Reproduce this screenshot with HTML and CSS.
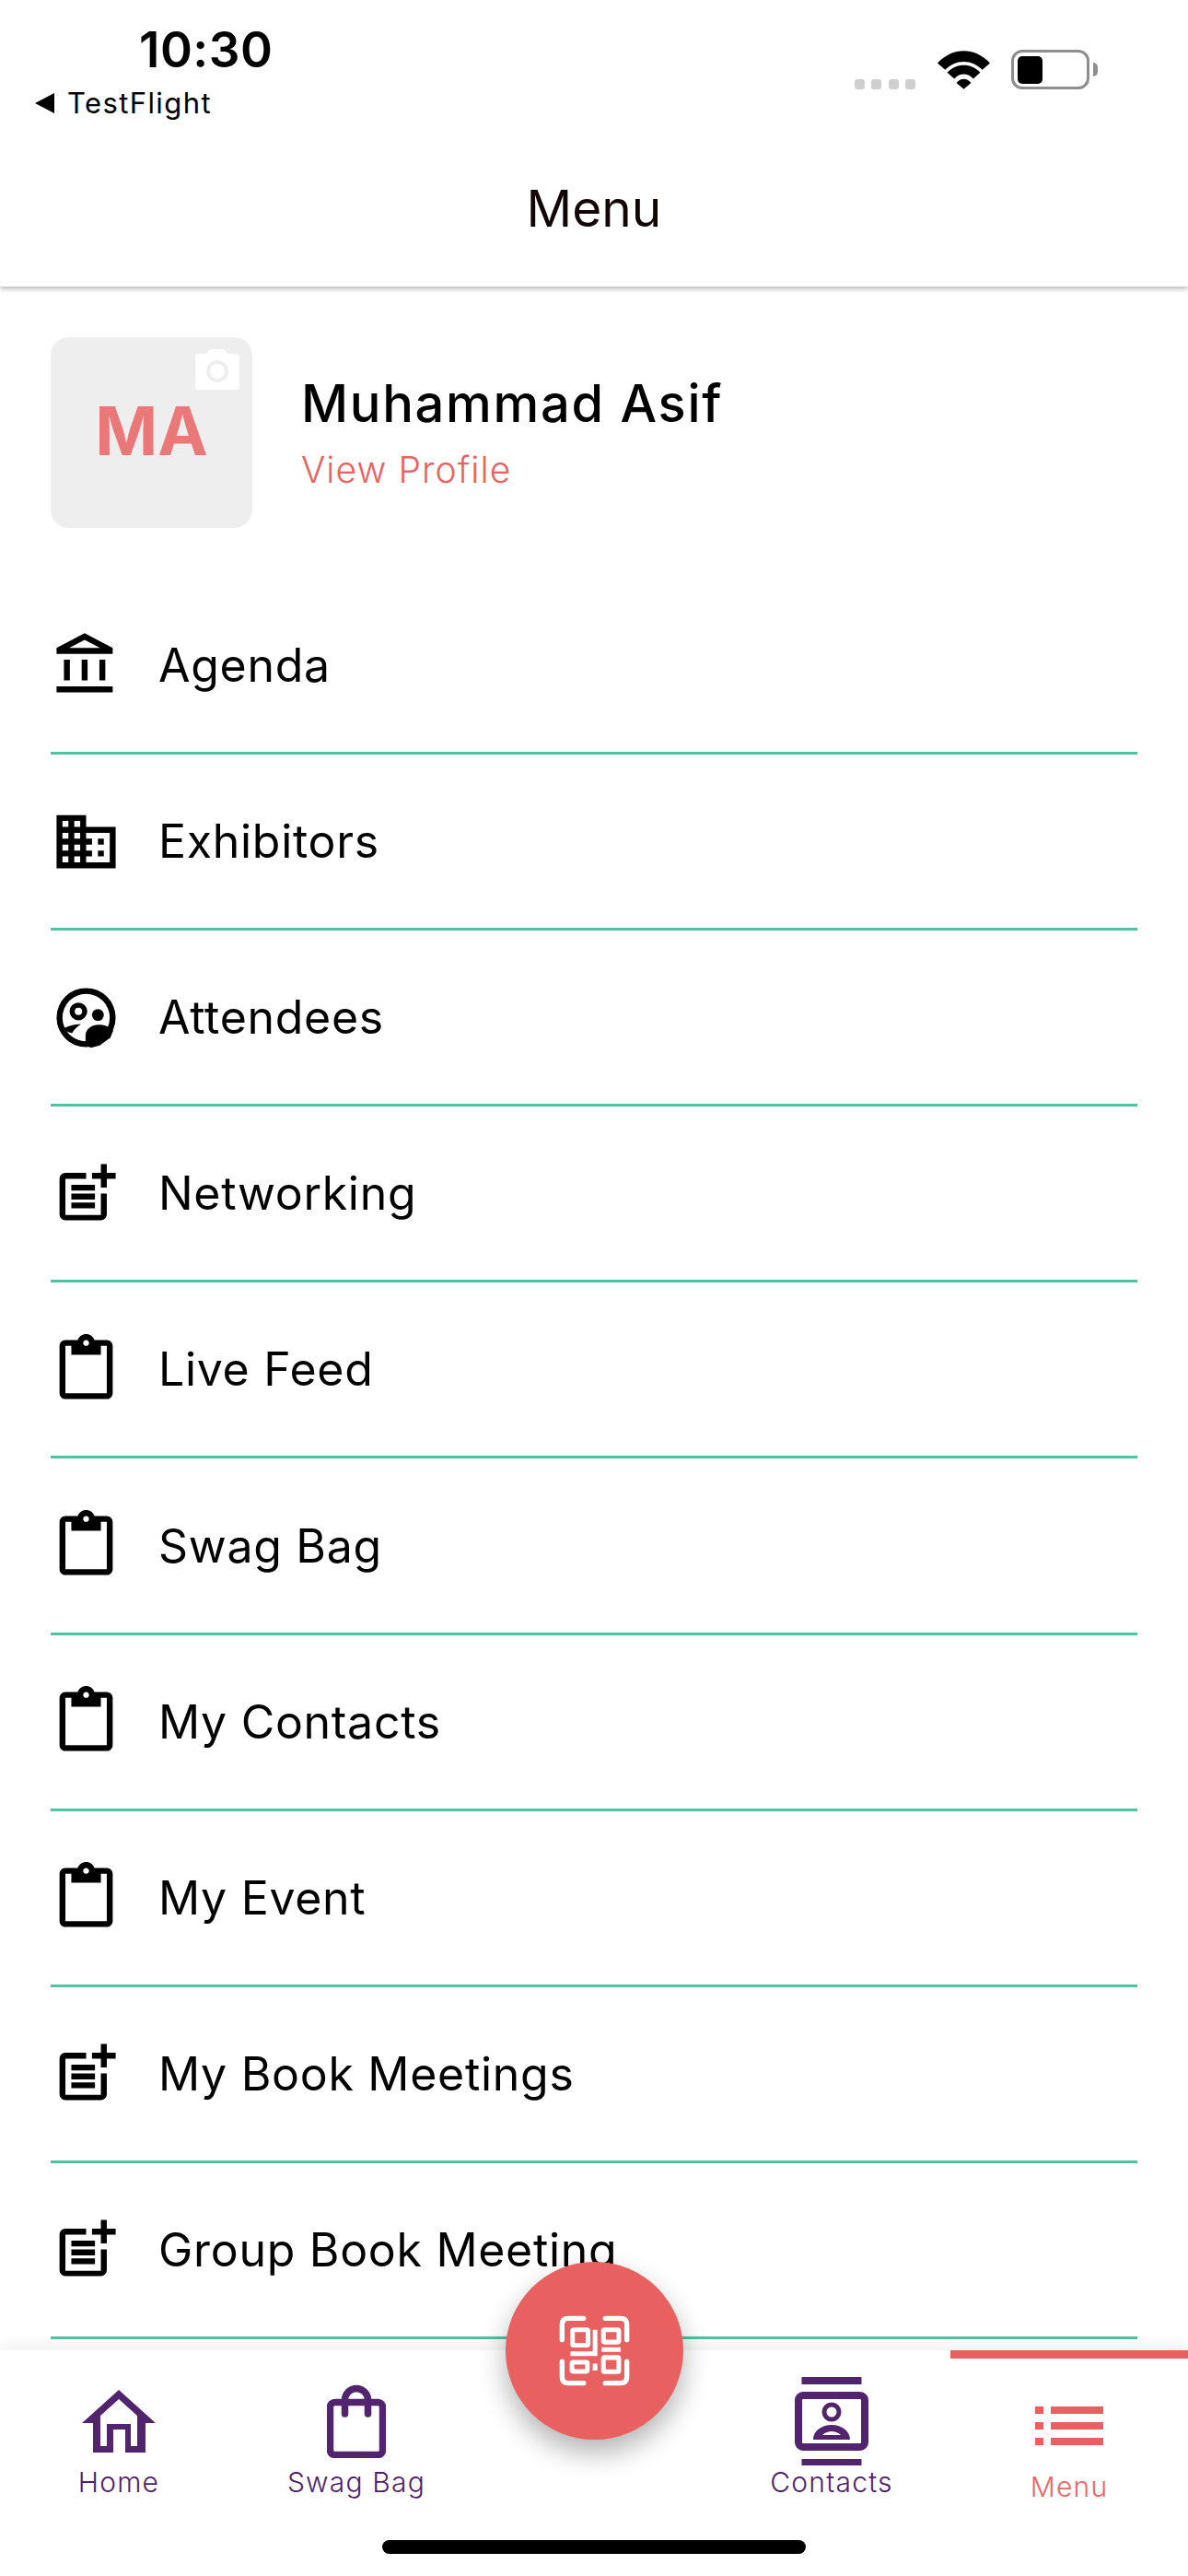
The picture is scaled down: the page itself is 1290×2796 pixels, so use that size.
FILE: index.html
```html
<!DOCTYPE html>
<html lang="en">
<head>
<meta charset="utf-8">
<title>Menu</title>
<link rel="stylesheet" href="styles.css">
</head>
<body>
<svg class="sprite" xmlns="http://www.w3.org/2000/svg">
  <symbol id="i-bank" viewBox="0 0 24 24"><path d="M6.5 10h-2v7h2v-7zm6 0h-2v7h2v-7zm8.5 9H2v2h19v-2zm-2.5-9h-2v7h2v-7zm-7-6.74L16.71 6H6.29l5.21-2.74m0-2.26L2 6v2h19V6l-9.5-5z"/></symbol>
  <symbol id="i-domain" viewBox="0 0 24 24"><path d="M12 7V3H2v18h20V7H12zM6 19H4v-2h2v2zm0-4H4v-2h2v2zm0-4H4V9h2v2zm0-4H4V5h2v2zm4 12H8v-2h2v2zm0-4H8v-2h2v2zm0-4H8V9h2v2zm0-4H8V5h2v2zm10 12h-8v-2h2v-2h-2v-2h2v-2h-2V9h8v10zm-2-8h-2v2h2v-2zm0 4h-2v2h2v-2z"/></symbol>
  <symbol id="i-group" viewBox="0 0 24 24"><path fill-rule="evenodd" d="M12 2a10 10 0 1 0 0 20 10 10 0 0 0 0-20zm0 2a8 8 0 1 1 0 16 8 8 0 0 1 0-16z"/><path fill-rule="evenodd" d="M9.400 6.900a3 3 0 1 0 0 6 3 3 0 0 0 0-6zm0 1.750a1.250 1.250 0 1 1 0 2.500 1.250 1.250 0 0 1 0-2.500z"/><circle cx="16" cy="11.100" r="2"/><path d="M11.800 21v-3c0-2.200 2.200-3.600 4.400-3.600 1.800 0 3.800.6 5 2l-1 2.400-3.600 2.600-3 .8z"/><path d="M4 15.900c1.500-.9 3.800-1.600 6.300-1.700-1.400 1-2.300 1.800-3.100 3.100l-2.600-.9z"/></symbol>
  <symbol id="i-post" viewBox="0 0 24 24"><path d="M17 19.22H5V7h7V5H5c-1.100 0-2 .9-2 2v12c0 1.100.9 2 2 2h12c1.100 0 2-.9 2-2v-7h-2v7.220z"/><path d="M19 2h-2v3h-3c.01.01 0 2 0 2h3v2.990c.01.01 2 0 2 0V7h3V5h-3V2z"/><path d="M7 9h8v2H7zM7 12v2h8v-2h-3zM7 15h8v2H7z"/></symbol>
  <symbol id="i-clip" viewBox="0 0 24 24"><path d="M19 2h-4.180C14.400.84 13.300 0 12 0S9.600.84 9.180 2H5c-1.100 0-2 .9-2 2v16c0 1.100.9 2 2 2h14c1.100 0 2-.9 2-2V4c0-1.100-.9-2-2-2zm-7 0c.55 0 1 .45 1 1s-.45 1-1 1-1-.45-1-1 .45-1 1-1zm7 18H5V4h2v3h10V4h2v16z"/></symbol>
</svg>

<div class="app">
  <header class="topbar">
    <div class="status">
      <div class="status-left">
        <div class="time">10:30</div>
        <div class="back"><span class="back-arrow"></span>TestFlight</div>
      </div>
      <div class="status-right">
        <div class="signal"><i></i><i></i><i></i><i></i></div>
        <svg class="wifi" viewBox="293 45 172 125"><path d="M293 85C318 58 348 45 379 45s61 13 86 40l-25 22c-18-18-38-27-61-27s-43 9-61 27z"/><path d="M325 116c16-16 34-24 54-24s38 8 54 24l-23 20c-9-10-19-15-31-15s-22 5-31 15z"/><path d="M355 150c7-9 15-13 24-13s17 4 24 13l-24 20z"/></svg>
        <div class="battery"><span class="battery-fill"></span></div>
        <span class="battery-nub"></span>
      </div>
    </div>
    <h1 class="title">Menu</h1>
  </header>

  <main class="content">
    <section class="profile">
      <div class="avatar">
        <span class="initials">MA</span>
        <svg class="camera" viewBox="0 0 48 44"><path class="camera-body" d="M3 5h9l2-3c.6-1.300 1.600-2 3-2h13c1.400 0 2.400.7 3 2l2 3h10c1.700 0 3 1.300 3 3v33c0 1.700-1.300 3-3 3H3c-1.700 0-3-1.300-3-3V8c0-1.700 1.300-3 3-3z"/><circle class="camera-lens" cx="24" cy="24" r="10"/></svg>
      </div>
      <div class="who">
        <div class="name">Muhammad Asif</div>
        <div class="view">View Profile</div>
      </div>
    </section>

    <nav class="menu-list">
      <a class="row"><svg class="row-icon"><use href="#i-bank"/></svg><span>Agenda</span></a>
      <a class="row"><svg class="row-icon"><use href="#i-domain"/></svg><span>Exhibitors</span></a>
      <a class="row"><svg class="row-icon"><use href="#i-group"/></svg><span>Attendees</span></a>
      <a class="row"><svg class="row-icon"><use href="#i-post"/></svg><span>Networking</span></a>
      <a class="row"><svg class="row-icon"><use href="#i-clip"/></svg><span>Live Feed</span></a>
      <a class="row"><svg class="row-icon"><use href="#i-clip"/></svg><span>Swag Bag</span></a>
      <a class="row"><svg class="row-icon"><use href="#i-clip"/></svg><span>My Contacts</span></a>
      <a class="row"><svg class="row-icon"><use href="#i-clip"/></svg><span>My Event</span></a>
      <a class="row"><svg class="row-icon"><use href="#i-post"/></svg><span>My Book Meetings</span></a>
      <a class="row"><svg class="row-icon"><use href="#i-post"/></svg><span>Group Book Meeting</span></a>
    </nav>
  </main>

  <footer class="tabbar">
    <button class="fab" aria-label="Scan">
      <svg class="qr" viewBox="228 215 230 230">
        <path class="qr-thin" d="M238 295V245q0-20 20-20h50M378 225h50q20 0 20 20v50M448 365v50q0 20-20 20h-50M308 435h-50q-20 0-20-20v-50"/>
        <rect class="qr-line" x="272" y="262" width="50" height="50" rx="4"/>
        <rect class="qr-line" x="372" y="262" width="50" height="40" rx="4"/>
        <rect class="qr-line" x="270" y="367" width="50" height="30" rx="4"/>
        <rect class="qr-line" x="372" y="352" width="50" height="46" rx="4"/>
        <path class="qr-line" d="M345 262v78h-80M366 326h62M345 372v22"/>
      </svg>
    </button>
    <div class="tabs">
      <a class="tab">
        <span class="tab-icon"><svg class="ico-home" viewBox="0 0 80 68"><path fill-rule="evenodd" d="M40 0l40 36H69v32H47V43H34v25H12V36H0zm0 10L20 28v33h7V37h26v24h7V28z"/></svg></span>
        <span class="tab-label">Home</span>
      </a>
      <a class="tab">
        <span class="tab-icon"><svg class="ico-bag" viewBox="0 0 64 80"><rect x="3.500" y="19.500" width="57" height="57" rx="5"/><path d="M19.500 32V17a12.500 12.500 0 0 1 25 0v15"/></svg></span>
        <span class="tab-label">Swag Bag</span>
      </a>
      <div class="tab tab-gap"></div>
      <a class="tab">
        <span class="tab-icon"><svg class="ico-contacts" viewBox="0 0 80 96"><path class="solid" d="M7.500 0h65v8h-65zM7.500 89h65v7h-65z"/><rect x="4" y="20" width="72" height="56" rx="5"/><circle class="head" cx="40" cy="38" r="8"/><path class="solid" fill-rule="evenodd" d="M20 68c0-10 10-16 20-16s20 6 20 16zm10-5h20c-3-3-7-4-10-4s-7 1-10 4z"/></svg></span>
        <span class="tab-label">Contacts</span>
      </a>
      <a class="tab tab-active">
        <span class="tab-icon"><span class="ico-menu"><i></i><b></b><i></i><b></b><i></i><b></b></span></span>
        <span class="tab-label">Menu</span>
      </a>
    </div>
    <div class="home-indicator"></div>
  </footer>
</div>
</body>
</html>
```
FILE: styles.css
```css
* { box-sizing: border-box; }
html, body { margin: 0; padding: 0; background: #fff; }
body { font-family: Inter, "Liberation Sans", sans-serif; color: #000; }
.sprite { display: none; }

.app { width: 1290px; height: 2796px; display: flex; flex-direction: column; overflow: hidden; background: #fff; }

/* header */
.topbar { height: 311px; flex: none; position: relative; z-index: 2; background: #fff; box-shadow: 0 2px 6px rgba(0,0,0,.32); }
.status { display: flex; justify-content: space-between; padding: 23px 98px 0 38px; height: 140px; }
.status-left { display: flex; flex-direction: column; }
.time { font-size: 53px; font-weight: 600; line-height: 62px; margin-left: 113px; letter-spacing: .5px; }
.back { display: flex; align-items: center; gap: 14px; font-size: 31px; font-weight: 400; line-height: 36px; margin-top: 9px; letter-spacing: 1.400px; }
.back-arrow { width: 0; height: 0; border-style: solid; border-width: 11px 21px 11px 0; border-color: transparent #000 transparent transparent; }
.status-right { display: flex; align-items: flex-end; height: 74px; }
.signal { display: flex; gap: 7.300px; margin-right: 24px; }
.signal i { width: 11px; height: 11px; border-radius: 3px; background: #cfcfcf; }
.wifi { width: 57px; height: 42px; margin-right: 23px; display: block; }
.battery { width: 85px; height: 43px; border: 3px solid #8e8e8e; border-radius: 12px; padding: 4px; }
.battery-fill { display: block; width: 27px; height: 30px; background: #000; border-radius: 5px; }
.battery-nub { width: 5px; height: 15px; margin: 0 0 14px 4px; background: #8e8e8e; border-radius: 0 8px 8px 0; }
.title { margin: 0; text-align: center; font-size: 55px; font-weight: 400; line-height: 70px; color: #120606; padding-top: 51px; }

/* body */
.content { flex: 1; overflow: hidden; padding: 55px 55px 0; }
.profile { display: flex; align-items: center; gap: 53px; padding-bottom: 55px; }
.avatar { position: relative; width: 219px; height: 207px; background: #eee; border-radius: 20px; display: flex; align-items: center; justify-content: center; }
.initials { font-size: 73px; font-weight: 700; color: #ea7878; line-height: 1; margin-top: -4px; letter-spacing: 0; }
.camera { position: absolute; top: 13px; right: 14px; width: 48px; height: 44px; }
.camera-body { fill: #fff; }
.camera-lens { fill: none; stroke: #eee; stroke-width: 4px; }
.who { display: flex; flex-direction: column; gap: 13px; }
.name { font-size: 56px; font-weight: 550; line-height: 68px; letter-spacing: 1.700px; }
.view { font-size: 39px; font-weight: 350; line-height: 50px; color: #eb6262; letter-spacing: 1.100px; }

.row { display: flex; align-items: center; gap: 40px; height: 191.100px; border-bottom: 3px solid #4fc3a1; font-size: 50px; font-weight: 370; line-height: 60px; letter-spacing: .7px; color: #000; }
.row-icon { width: 77px; height: 77px; flex: none; fill: #000; }

/* tabs */
.tabbar { position: relative; z-index: 3; flex: none; height: 245px; background: #fff; box-shadow: 0 -8px 14px rgba(0,0,0,.05); display: flex; flex-direction: column; }
.tabs { display: grid; grid-template-columns: repeat(5, 258px); height: 206px; }
.tab { display: flex; flex-direction: column; align-items: center; padding-top: 29px; color: #4f1f6e; }
.tab-icon { height: 96px; display: flex; align-items: center; justify-content: center; }
.tab-label { font-size: 30px; font-weight: 350; line-height: 36px; letter-spacing: 1.200px; white-space: nowrap; }
.tab-active { border-top: 9px solid #e96060; padding-top: 25px; color: #ec6666; }

.ico-home { width: 80px; height: 68px; fill: #52246e; display: block; }
.ico-bag { width: 64px; height: 80px; fill: none; stroke: #52246e; stroke-width: 7.500px; stroke-linecap: round; display: block; }
.ico-contacts { width: 80px; height: 96px; fill: none; stroke: #52246e; stroke-width: 8px; display: block; }
.ico-contacts .solid { fill: #52246e; stroke: none; }
.ico-contacts .head { stroke-width: 5px; }
.ico-menu { display: grid; grid-template-columns: 9px 57px; column-gap: 8px; row-gap: 9px; }
.ico-menu i, .ico-menu b { display: block; height: 8px; background: #e96060; }

.fab { position: absolute; left: 50%; top: -96px; width: 193px; height: 193px; margin-left: -96.500px; border: 0; padding: 0; border-radius: 50%; background: #e96060; box-shadow: 0 14px 30px rgba(0,0,0,.3); display: flex; align-items: center; justify-content: center; }
.qr { width: 77px; height: 77px; display: block; }
.qr-thin { fill: none; stroke: #fff; stroke-width: 16px; stroke-linecap: round; }
.qr-line { fill: none; stroke: #fff; stroke-width: 15px; }

.home-indicator { width: 460px; height: 15px; border-radius: 8px; background: #000; margin: 0 auto; }
```
